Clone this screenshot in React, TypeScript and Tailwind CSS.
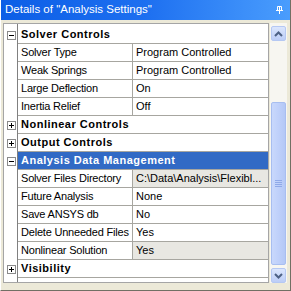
import React from "react";

type Row =
  | { kind: "group"; label: string; open: boolean; selected?: boolean }
  | { kind: "prop"; label: string; value: string; grey?: boolean };

const rows: Row[] = [
  { kind: "group", label: "Solver Controls", open: true },
  { kind: "prop", label: "Solver Type", value: "Program Controlled" },
  { kind: "prop", label: "Weak Springs", value: "Program Controlled" },
  { kind: "prop", label: "Large Deflection", value: "On" },
  { kind: "prop", label: "Inertia Relief", value: "Off" },
  { kind: "group", label: "Nonlinear Controls", open: false },
  { kind: "group", label: "Output Controls", open: false },
  { kind: "group", label: "Analysis Data Management", open: true, selected: true },
  { kind: "prop", label: "Solver Files Directory", value: "C:\\Data\\Analysis\\Flexibl...", grey: true },
  { kind: "prop", label: "Future Analysis", value: "None" },
  { kind: "prop", label: "Save ANSYS db", value: "No" },
  { kind: "prop", label: "Delete Unneeded Files", value: "Yes" },
  { kind: "prop", label: "Nonlinear Solution", value: "Yes", grey: true },
  { kind: "group", label: "Visibility", open: false },
];

const Expander = ({ open }: { open: boolean }) => (
  <svg width="9" height="9" viewBox="0 0 9 9" className="block">
    <rect x="0.5" y="0.5" width="8" height="8" fill="#fff" stroke="#8a8a8a" />
    <line x1="2" y1="4.5" x2="7" y2="4.5" stroke="#000" />
    {!open && <line x1="4.5" y1="2" x2="4.5" y2="7" stroke="#000" />}
  </svg>
);

const Chevron = ({ up }: { up: boolean }) => (
  <svg width="9" height="6" viewBox="0 0 9 6" className="block">
    <path
      d={up ? "M1 5 L4.5 1.5 L8 5" : "M1 1 L4.5 4.5 L8 1"}
      fill="none"
      stroke="#4d6185"
      strokeWidth="2"
    />
  </svg>
);

const ScrollButton = ({ up }: { up: boolean }) => (
  <div className="h-[15px] w-[15px] shrink-0 flex items-center justify-center rounded-[2px] border border-[#b5c8f3] bg-gradient-to-b from-[#dbe6fd] to-[#bccdf7]">
    <Chevron up={up} />
  </div>
);

export default function App() {
  return (
    <div
      className="w-[291px] h-[291px] bg-[#ece9d8] flex flex-col border-l border-l-white border-r border-r-[#716f64] border-b border-b-[#716f64] text-[11px] text-black overflow-hidden"
      style={{ fontFamily: '"Liberation Sans", Arial, sans-serif' }}
    >
      {/* title bar */}
      <div className="h-[20px] shrink-0 -ml-[1px] flex items-center justify-between pl-[5px] pr-[7px] bg-gradient-to-r from-[#0b5ee6] via-[#1d6ff0] to-[#4a9dfd] text-white">
        <span className="leading-none text-[11.5px]">Details of "Analysis Settings"</span>
        <svg width="7" height="8" viewBox="0 0 7 8" className="block">
          <path d="M1.5 0.5 H5.5 V4.5 H1.5 Z M3.5 0.5 V4.5" fill="none" stroke="#fff" />
          <rect x="0" y="4" width="7" height="1" fill="#fff" />
          <rect x="3" y="5" width="1" height="3" fill="#fff" />
        </svg>
      </div>

      <div className="flex flex-1 min-h-0 pt-[3px] pl-[2px] pb-[7px]">
        {/* property grid */}
        <div className="w-[266px] border border-[#a5a5a5] bg-white flex flex-col">
          <div className="h-[2px] shrink-0 flex">
            <div className="w-[14px] border-r border-[#808080]" />
          </div>
          {rows.map((r, i) => (
            <div key={i} className="h-[18px] shrink-0 flex">
              <div className="w-[14px] shrink-0 flex items-center justify-center border-r border-[#808080] pl-[2px]">
                {r.kind === "group" && <Expander open={r.open} />}
              </div>
              {r.kind === "group" ? (
                <div
                  className={`flex-1 flex items-center pl-[3px] border-b border-[#a7a6a0] font-bold tracking-[0.5px] ${
                    r.selected ? "bg-[#316ac5] text-white" : ""
                  }`}
                >
                  {r.label}
                </div>
              ) : (
                <div className="flex-1 min-w-0 flex border-b border-[#a7a6a0]">
                  <div className="w-[115px] shrink-0 flex items-center pl-[3px] border-r border-[#a7a6a0] whitespace-nowrap overflow-hidden tracking-[-0.2px]">
                    {r.label}
                  </div>
                  <div
                    className={`flex-1 min-w-0 flex items-center pl-[3px] whitespace-nowrap overflow-hidden ${
                      r.grey ? "bg-[#e8e7e2]" : ""
                    }`}
                  >
                    {r.value}
                  </div>
                </div>
              )}
            </div>
          ))}
          <div className="flex-1 flex">
            <div className="w-[14px] border-r border-[#808080]" />
          </div>
        </div>

        {/* scrollbar */}
        <div className="w-[17px] ml-[1px] bg-[#f7f6f1] flex flex-col items-center pt-[3px] pb-[0px]">
          <ScrollButton up />
          <div className="flex-1 w-[15px] flex flex-col pt-[61px] pb-[3px]">
            <div className="flex-1 rounded-[2px] border border-[#a8bef0] bg-gradient-to-r from-[#c9d8fc] via-[#bfd0fa] to-[#b4c8f6] flex items-center justify-center">
              <div className="flex flex-col gap-[1px]">
                <div className="w-[7px] h-[1px] bg-[#8fa9e8]" />
                <div className="w-[7px] h-[1px] bg-[#8fa9e8]" />
                <div className="w-[7px] h-[1px] bg-[#8fa9e8]" />
                <div className="w-[7px] h-[1px] bg-[#8fa9e8]" />
              </div>
            </div>
          </div>
          <ScrollButton up={false} />
        </div>
      </div>
    </div>
  );
}
